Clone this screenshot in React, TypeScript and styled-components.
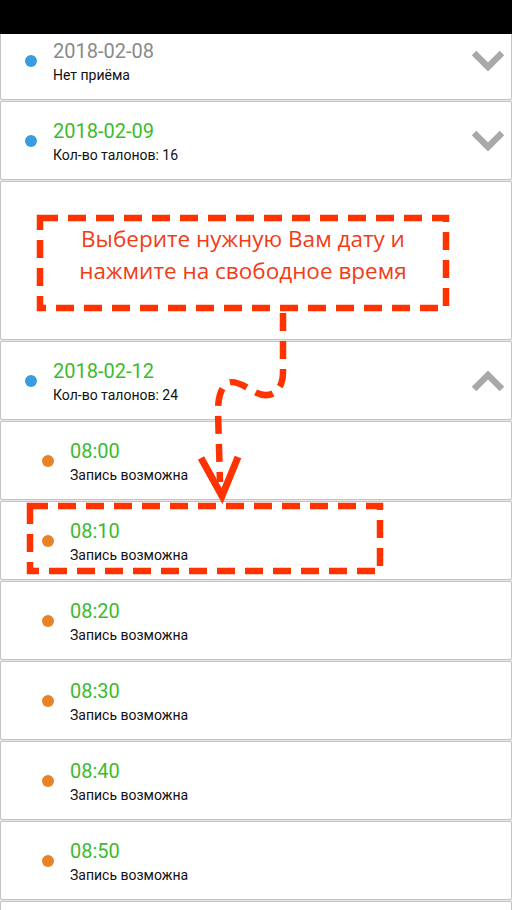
import React from "react";
import styled, { createGlobalStyle } from "styled-components";

const Global = createGlobalStyle`
  html, body { margin: 0; padding: 0; background: #e6e6e6; }
  body { width: 512px; height: 910px; overflow: hidden; font-family: Roboto, "Noto Sans", sans-serif; }
`;

const Screen = styled.div`
  position: relative;
  width: 512px;
  height: 910px;
  overflow: hidden;
  background: #e6e6e6;
`;

const StatusBar = styled.div`
  position: relative;
  z-index: 2;
  height: 34px;
  background: #000;
`;

const List = styled.div`
  display: flex;
  flex-direction: column;
  gap: 1px;
  margin-top: -13px;
`;

const Card = styled.div<{ $tall?: boolean }>`
  box-sizing: border-box;
  height: ${(p) => (p.$tall ? 159 : 79)}px;
  background: #fff;
  border: 1px solid #c4c4c4;
  border-radius: 2px;
  display: flex;
  align-items: flex-start;
  padding: 0 7px 0 0;
  flex-shrink: 0;
`;

const Dot = styled.span<{ $color: string; $indent: number }>`
  width: 12px;
  height: 12px;
  border-radius: 50%;
  background: ${(p) => p.$color};
  margin: 33px 0 0 ${(p) => p.$indent}px;
  flex-shrink: 0;
`;

const Texts = styled.div<{ $gap: number }>`
  display: flex;
  flex-direction: column;
  padding-top: 17px;
  margin-left: ${(p) => p.$gap}px;
  flex: 1;
`;

const Title = styled.div<{ $muted?: boolean }>`
  font-size: 20px;
  line-height: 24px;
  color: ${(p) => (p.$muted ? "#8a8a8a" : "#3dbb2e")};
`;

const Sub = styled.div`
  font-size: 14px;
  line-height: 16px;
  margin-top: 4px;
  color: #111;
`;

const Chevron = styled.svg`
  align-self: center;
  width: 32px;
  height: 22px;
  flex-shrink: 0;
  filter: blur(0.4px);
`;

const Overlay = styled.svg`
  position: absolute;
  left: 0;
  top: 0;
  z-index: 3;
  pointer-events: none;
`;

const Callout = styled.div`
  position: absolute;
  z-index: 4;
  left: 40px;
  top: 218px;
  width: 406px;
  height: 90px;
  box-sizing: border-box;
  padding-top: 5px;
  display: flex;
  flex-direction: column;
  align-items: center;
  font-family: "Open Sans", "Noto Sans", sans-serif;
  font-size: 22.5px;
  line-height: 32px;
  color: #f23c16;
  text-align: center;
`;

const Down = () => (
  <Chevron viewBox="0 0 32 22">
    <polyline points="2,3 16,17 30,3" fill="none" stroke="#a9a9a9" strokeWidth="6.5" />
  </Chevron>
);
const Up = () => (
  <Chevron viewBox="0 0 32 22">
    <polyline points="2,19 16,5 30,19" fill="none" stroke="#a9a9a9" strokeWidth="6.5" />
  </Chevron>
);

type Day = { date: string; sub: string; muted?: boolean; open?: boolean };
const days: Day[] = [
  { date: "2018-02-08", sub: "Нет приёма", muted: true },
  { date: "2018-02-09", sub: "Кол-во талонов: 16" },
];
const times = ["08:00", "08:10", "08:20", "08:30", "08:40", "08:50"];

const DayCard = ({ d }: { d: Day }) => (
  <Card>
    <Dot $color="#3b9be0" $indent={24} />
    <Texts $gap={16}>
      <Title $muted={d.muted}>{d.date}</Title>
      <Sub>{d.sub}</Sub>
    </Texts>
    {d.open ? <Up /> : <Down />}
  </Card>
);

export default function App() {
  return (
    <Screen>
      <Global />
      <StatusBar />
      <List>
        {days.map((d) => (
          <DayCard key={d.date} d={d} />
        ))}
        <Card $tall />
        <DayCard d={{ date: "2018-02-12", sub: "Кол-во талонов: 24", open: true }} />
        {times.map((t) => (
          <Card key={t}>
            <Dot $color="#e8832a" $indent={41} />
            <Texts $gap={16}>
              <Title>{t}</Title>
              <Sub>Запись возможна</Sub>
            </Texts>
          </Card>
        ))}
        <Card />
      </List>
      <Overlay width="512" height="910" viewBox="0 0 512 910">
        <g fill="none" stroke="#ff3300" strokeWidth="6.5" strokeDasharray="18 10">
          <rect x="40" y="218" width="406" height="90" />
          <path d="M283 313 L283 372 C283 392 270 400 255 392 C243 385 232 378 225 385 C219 392 218 402 218 412 L220 482" />
          <rect x="30" y="506" width="350" height="65" />
        </g>
        <polyline points="201,458 222,496 238,457" fill="none" stroke="#ff3300" strokeWidth="7" />
      </Overlay>
      <Callout>
        <div>Выберите нужную Вам дату и</div>
        <div>нажмите на свободное время</div>
      </Callout>
    </Screen>
  );
}
